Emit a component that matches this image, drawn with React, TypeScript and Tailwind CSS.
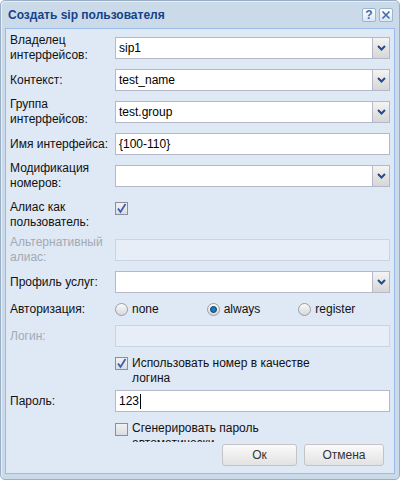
import React from "react";

const font = { fontFamily: '"Liberation Sans", Arial, sans-serif' };

function Label({ text, disabled }: { text: React.ReactNode; disabled?: boolean }) {
  return (
    <div
      className={`w-[105px] shrink-0 text-[12px] leading-[15px] ${
        disabled ? "text-[#a3aab3]" : "text-[#111]"
      }`}
    >
      {text}
    </div>
  );
}

function TextBox({ value, disabled, caret }: { value?: string; disabled?: boolean; caret?: boolean }) {
  return (
    <div
      className={`flex h-[22px] flex-1 items-center border px-[3px] text-[12px] text-black ${
        disabled ? "border-[#c9d5e2] bg-[#e7eef8]" : "border-[#b5b8c8] bg-white"
      }`}
    >
      {value}
      {caret && <span className="ml-px inline-block h-[15px] w-px bg-black" />}
    </div>
  );
}

function Combo({ value }: { value?: string }) {
  return (
    <div className="flex h-[22px] flex-1 border border-[#b5b8c8] bg-white">
      <div className="flex flex-1 items-center px-[3px] text-[12px] text-black">{value}</div>
      <div className="flex w-[17px] items-center justify-center border-l border-[#b5b8c8] bg-gradient-to-b from-[#f4f4f4] to-[#d6d6d6]">
        <svg width="9" height="6" viewBox="0 0 9 6">
          <path d="M1 1 L4.5 4.5 L8 1" fill="none" stroke="#1f4f8f" strokeWidth="2" />
        </svg>
      </div>
    </div>
  );
}

function Check({ checked }: { checked?: boolean }) {
  return (
    <div className="flex h-[13px] w-[13px] shrink-0 items-center justify-center border border-[#8c8f96] bg-gradient-to-b from-[#f2f2f2] to-[#d9dde2]">
      {checked && (
        <svg width="11" height="11" viewBox="0 0 11 11">
          <path d="M2 5.5 L4.5 9 L9.5 1" fill="none" stroke="#3b5eb3" strokeWidth="1.8" />
        </svg>
      )}
    </div>
  );
}

function Radio({ checked, label }: { checked?: boolean; label: string }) {
  return (
    <div className="flex items-center">
      <div className="flex h-[13px] w-[13px] items-center justify-center rounded-full border border-[#9a9ea4] bg-gradient-to-b from-[#fafafa] to-[#d6d8da]">
        {checked && (
          <div className="h-[7px] w-[7px] rounded-full border border-[#0c3d66] bg-[#1a7cb5]" />
        )}
      </div>
      <span className="ml-[4px] text-[12px] text-[#111]">{label}</span>
    </div>
  );
}

function Row({ children, className }: { children: React.ReactNode; className?: string }) {
  return <div className={`flex h-[30px] items-center ${className ?? ""}`}>{children}</div>;
}

export default function App() {
  return (
    <div
      style={font}
      className="flex h-[480px] w-[400px] flex-col rounded-[5px] border border-[#9aafc6] bg-[#cbdae8] shadow-[inset_1px_1px_0_#e6eef6]"
    >
      {/* header */}
      <div className="flex h-[27px] shrink-0 items-center justify-between pl-[7px] pr-[6px]">
        <div className="text-[12px] font-bold text-[#15428b]">Создать sip пользователя</div>
        <div className="flex gap-[3px]">
          <div className="flex h-[14px] w-[14px] items-center justify-center rounded-[2px] border border-[#9ab4d4] bg-gradient-to-b from-white to-[#dbe6f3] text-[12px] font-bold leading-none text-[#3f6da5]">
            ?
          </div>
          <div className="flex h-[14px] w-[14px] items-center justify-center rounded-[2px] border border-[#9ab4d4] bg-gradient-to-b from-white to-[#dbe6f3]">
            <svg width="10" height="10" viewBox="0 0 10 10">
              <path d="M1.5 1.5 L8.5 8.5 M8.5 1.5 L1.5 8.5" stroke="#3f6da5" strokeWidth="1.6" />
            </svg>
          </div>
        </div>
      </div>

      {/* body */}
      <div className="mx-[4px] flex h-[446px] flex-col border border-[#99bbe8] bg-[#dfe8f5]">
        <div className="h-[413px] overflow-hidden pl-[4px] pr-[4px] pt-[4px]">
          <div className="flex flex-col">
            <Row>
              <Label text={<>Владелец<br />интерфейсов:</>} />
              <Combo value="sip1" />
            </Row>
            <Row className="mt-[2px]">
              <Label text="Контекст:" />
              <Combo value="test_name" />
            </Row>
            <Row className="mt-[2px]">
              <Label text={<>Группа<br />интерфейсов:</>} />
              <Combo value="test.group" />
            </Row>
            <Row className="mt-[2px]">
              <Label text="Имя интерфейса:" />
              <TextBox value="{100-110}" />
            </Row>
            <Row className="mt-[2px]">
              <Label text={<>Модификация<br />номеров:</>} />
              <Combo />
            </Row>
            <div className="mt-[9px] flex h-[30px] items-start">
              <Label text={<>Алиас как<br />пользователь:</>} />
              <div className="mt-[2px]">
                <Check checked />
              </div>
            </div>
            <Row className="mt-[5px]">
              <Label disabled text={<>Альтернативный<br />алиас:</>} />
              <TextBox disabled />
            </Row>
            <Row className="mt-[2px]">
              <Label text="Профиль услуг:" />
              <Combo />
            </Row>
            <div className="mt-[2px] flex h-[20px] items-center">
              <Label text="Авторизация:" />
              <div className="grid flex-1 grid-cols-3">
                <Radio label="none" />
                <Radio label="always" checked />
                <Radio label="register" />
              </div>
            </div>
            <Row className="mt-[2px]">
              <Label disabled text="Логин:" />
              <TextBox disabled />
            </Row>
            <div className="mt-[5px] flex h-[30px] items-start">
              <div className="w-[105px] shrink-0" />
              <div className="mt-px">
                <Check checked />
              </div>
              <div className="ml-[4px] w-[185px] text-[12px] leading-[15px] text-[#111]">
                Использовать номер в качестве логина
              </div>
            </div>
            <Row>
              <Label text="Пароль:" />
              <TextBox value="123" caret />
            </Row>
            <div className="mt-[5px] flex h-[30px] items-start">
              <div className="w-[105px] shrink-0" />
              <div className="mt-[2px]">
                <Check />
              </div>
              <div className="ml-[4px] w-[185px] text-[12px] leading-[15px] text-[#111]">
                Сгенерировать пароль автоматически
              </div>
            </div>
          </div>
        </div>

        {/* footer */}
        <div className="flex flex-1 items-start justify-end gap-[7px] pr-[10px] pt-[2px]">
          <button className="h-[22px] w-[75px] rounded-[3px] border border-[#c4c4c4] bg-gradient-to-b from-[#fafafa] to-[#e2e2e2] text-[12px] text-[#333]">
            Ок
          </button>
          <button className="h-[22px] w-[80px] rounded-[3px] border border-[#c4c4c4] bg-gradient-to-b from-[#fafafa] to-[#e2e2e2] text-[12px] text-[#333]">
            Отмена
          </button>
        </div>
      </div>
    </div>
  );
}
